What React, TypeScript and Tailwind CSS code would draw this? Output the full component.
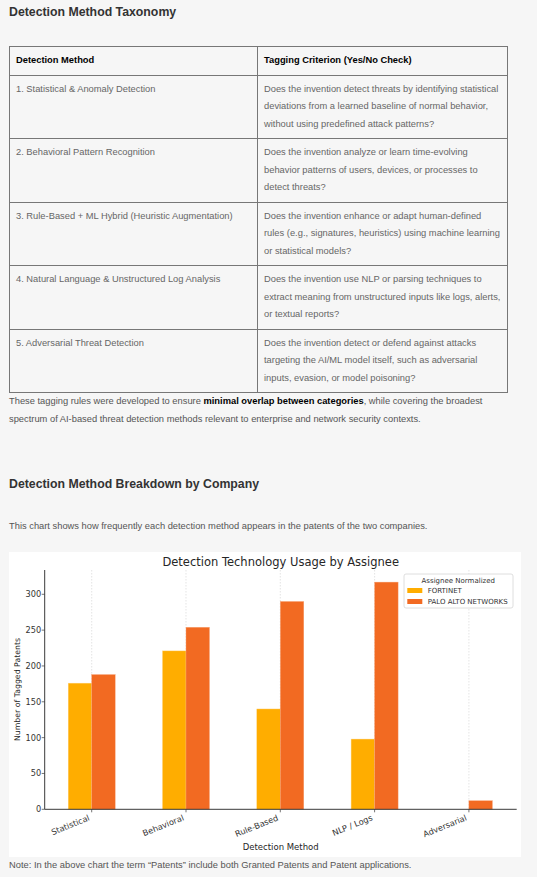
const rows = [
  {
    method: "1. Statistical & Anomaly Detection",
    criterion:
      "Does the invention detect threats by identifying statistical deviations from a learned baseline of normal behavior, without using predefined attack patterns?",
  },
  {
    method: "2. Behavioral Pattern Recognition",
    criterion:
      "Does the invention analyze or learn time-evolving behavior patterns of users, devices, or processes to detect threats?",
  },
  {
    method: "3. Rule-Based + ML Hybrid (Heuristic Augmentation)",
    criterion:
      "Does the invention enhance or adapt human-defined rules (e.g., signatures, heuristics) using machine learning or statistical models?",
  },
  {
    method: "4. Natural Language & Unstructured Log Analysis",
    criterion:
      "Does the invention use NLP or parsing techniques to extract meaning from unstructured inputs like logs, alerts, or textual reports?",
  },
  {
    method: "5. Adversarial Threat Detection",
    criterion:
      "Does the invention detect or defend against attacks targeting the AI/ML model itself, such as adversarial inputs, evasion, or model poisoning?",
  },
];

const series = [
  { name: "Statistical", fortinet: 176, palo: 188 },
  { name: "Behavioral", fortinet: 221, palo: 254 },
  { name: "Rule-Based", fortinet: 140, palo: 290 },
  { name: "NLP / Logs", fortinet: 98, palo: 317 },
  { name: "Adversarial", fortinet: 0, palo: 12 },
];

const FORTINET = "#ffad00";
const PALO = "#f26a22";

// chart geometry, in px inside the 512x305 box
const X0 = 35.7;
const X1 = 507.7;
const Y0 = 257.3;
const YTOP = 18;
const PER = 0.7167;
const BAR = 23.5;
const cx = (i: number) => 82.7 + i * 94.3;
const y = (v: number) => Y0 - v * PER;

const UsageChart = () => (
  <svg viewBox="0 0 512 305" width={512} height={305} className="block bg-white" style={{ fontFamily: '"DejaVu Sans", sans-serif' }}>
    <text x={271.7} y={14} textAnchor="middle" fontSize={11.5} fill="#262626">
      Detection Technology Usage by Assignee
    </text>

    {/* grid */}
    {series.map((s, i) => (
      <line key={s.name} x1={cx(i)} x2={cx(i)} y1={YTOP} y2={Y0} stroke="#d9d9d9" strokeWidth={0.7} strokeDasharray="1.5 1.5" />
    ))}

    {/* bars */}
    {series.map((s, i) => (
      <g key={s.name + "-bars"}>
        {s.fortinet > 0 && (
          <rect x={cx(i) - BAR} y={y(s.fortinet)} width={BAR} height={s.fortinet * PER} fill={FORTINET} stroke="#ffd27a" strokeWidth={0.4} />
        )}
        <rect x={cx(i)} y={y(s.palo)} width={BAR} height={s.palo * PER} fill={PALO} stroke="#f8a57a" strokeWidth={0.4} />
      </g>
    ))}

    {/* y axis */}
    <line x1={X0} x2={X0} y1={YTOP} y2={Y0} stroke="#3a3a3a" strokeWidth={1} />
    {[0, 50, 100, 150, 200, 250, 300].map((v) => (
      <g key={v}>
        <line x1={X0 - 3} x2={X0} y1={y(v)} y2={y(v)} stroke="#3a3a3a" strokeWidth={0.7} />
        <text x={X0 - 3.5} y={y(v) + 3} textAnchor="end" fontSize={8.2} fill="#333">
          {v}
        </text>
      </g>
    ))}
    <text x={11} y={137.5} textAnchor="middle" fontSize={7.8} fill="#262626" transform="rotate(-90 11 137.5)">
      Number of Tagged Patents
    </text>

    {/* x axis */}
    <line x1={X0} x2={X1} y1={Y0} y2={Y0} stroke="#3a3a3a" strokeWidth={1} />
    {series.map((s, i) => (
      <g key={s.name + "-tick"}>
        <line x1={cx(i)} x2={cx(i)} y1={Y0} y2={Y0 + 3} stroke="#3a3a3a" strokeWidth={0.7} />
        <text
          x={cx(i) - 1.5}
          y={268}
          textAnchor="end"
          fontSize={8.2}
          fill="#333"
          transform={`rotate(-22 ${cx(i) - 1.5} 268)`}
        >
          {s.name}
        </text>
      </g>
    ))}
    <text x={271.7} y={297.5} textAnchor="middle" fontSize={8.5} fill="#262626">
      Detection Method
    </text>

    {/* legend */}
    <rect x={395} y={22} width={109} height={34} rx={2} fill="#fff" fillOpacity={0.85} stroke="#d6d6d6" strokeWidth={0.8} />
    <text x={449.3} y={30.5} textAnchor="middle" fontSize={7} fill="#333">
      Assignee Normalized
    </text>
    <rect x={398.3} y={36} width={15} height={5} fill={FORTINET} />
    <text x={418.7} y={41} fontSize={7} fill="#333">
      FORTINET
    </text>
    <rect x={398.3} y={47} width={15} height={5} fill={PALO} />
    <text x={418.7} y={52} fontSize={7} fill="#333">
      PALO ALTO NETWORKS
    </text>
  </svg>
);

export default function App() {
  return (
    <div className="min-h-[877px] bg-[#f6f6f6] px-[9px] font-['Liberation_Sans',Arial,sans-serif] text-[9.33px] leading-[17.5px] text-[#555]">
      <h2 className="pt-[4px] text-[12.3px] font-bold leading-[17px] text-[#333]">Detection Method Taxonomy</h2>

      <table className="mt-[25px] w-[499px] table-fixed border-collapse">
        <colgroup>
          <col className="w-[248px]" />
          <col />
        </colgroup>
        <thead>
          <tr>
            <th className="border border-[#777] px-[6px] py-[5px] text-left font-bold text-black">Detection Method</th>
            <th className="border border-[#777] px-[6px] py-[5px] text-left font-bold text-black">Tagging Criterion (Yes/No Check)</th>
          </tr>
        </thead>
        <tbody>
          {rows.map((r) => (
            <tr key={r.method}>
              <td className="border border-[#777] px-[6px] py-[5px] align-top text-[#666]">{r.method}</td>
              <td className="border border-[#777] px-[6px] py-[5px] align-top text-[#666]">{r.criterion}</td>
            </tr>
          ))}
        </tbody>
      </table>

      <p className="w-[499px]">
        These tagging rules were developed to ensure <b className="text-black">minimal overlap between categories</b>, while covering the broadest
        spectrum of AI-based threat detection methods relevant to enterprise and network security contexts.
      </p>

      <h2 className="mt-[48px] text-[12.3px] font-bold leading-[17px] text-[#333]">Detection Method Breakdown by Company</h2>

      <p className="mt-[25px]">This chart shows how frequently each detection method appears in the patents of the two companies.</p>

      <div className="mt-[16.5px] w-[512px]">
        <UsageChart />
      </div>

      <p>Note: In the above chart the term “Patents” include both Granted Patents and Patent applications.</p>
    </div>
  );
}
